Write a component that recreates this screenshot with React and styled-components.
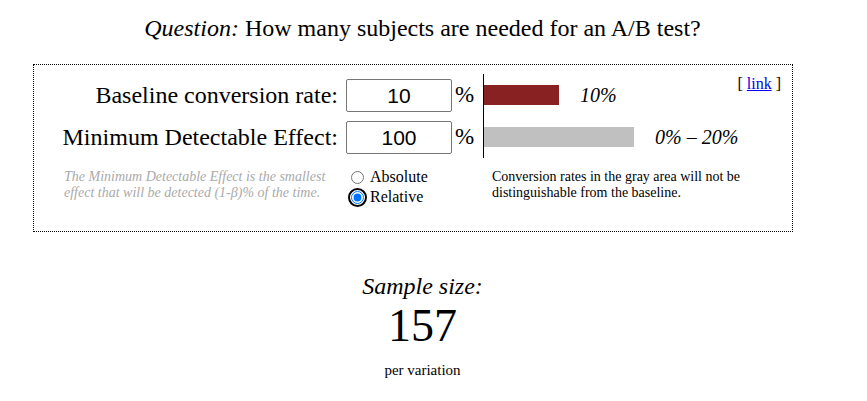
import React from 'react'
import styled, { createGlobalStyle } from 'styled-components'

const GlobalStyle = createGlobalStyle`
body {
    margin: 0;
    background: #fff;
    font-family: "Liberation Serif", "Times New Roman", serif;
    color: #000;
}
`

const Page = styled.div`
width: 845px;
`
const Title = styled.h1`
margin: 0;
padding-top: 14px;
text-align: center;
font-weight: normal;
font-size: 24px;
line-height: 28px;
`
const Em = styled.em``

const Box = styled.div`
position: relative;
box-sizing: border-box;
margin: 22px 0 0 33px;
width: 760px;
height: 168px;
border: 1px dotted #000;
padding-top: 9px;
`
const Grid = styled.div`
display: grid;
grid-template-columns: 312px 106px 31px 1fr;
grid-auto-rows: 42px;
`
const Label = styled.div`
text-align: right;
padding-right: 8px;
font-size: 24px;
line-height: 42px;
white-space: nowrap;
`
const InputCell = styled.div`
padding-top: 5px;
`
const NumberInput = styled.input`
box-sizing: border-box;
width: 106px;
height: 33px;
border: 1px solid #767676;
border-radius: 2px;
font-family: "Liberation Sans", Arial, sans-serif;
font-size: 21px;
text-align: center;
padding: 0;
`
const Percent = styled.div`
padding-left: 3px;
font-size: 23px;
line-height: 42px;
`
const BarCell = styled.div`
border-left: 1px solid #000;
display: flex;
align-items: center;
`
const Bar = styled.div`
height: 20px;
background: ${({ $color }) => $color};
`
const BarValue = styled.span`
margin-left: 21px;
font-style: italic;
font-size: 20px;
`
const LinkWrap = styled.div`
position: absolute;
top: 10px;
right: 11px;
font-size: 16px;
`
const Link = styled.a`
color: #0000ee;
`
const Lower = styled.div`
display: grid;
grid-template-columns: 312px 137px 1fr;
padding-top: 9px;
`
const Help = styled.div`
padding-left: 30px;
padding-right: 8px;
padding-top: 2px;
font-style: italic;
font-size: 14px;
line-height: 16px;
color: #aaa;
`
const Radios = styled.div`
display: flex;
flex-direction: column;
font-size: 16px;
`
const RadioRow = styled.label`
display: flex;
align-items: center;
height: 20px;
`
const Ring = styled.span`
display: inline-flex;
box-sizing: border-box;
width: 19px;
height: 19px;
margin: 0 3px 0 2px;
align-items: center;
justify-content: center;
border-radius: 50%;
border: 2px solid ${({ $on }) => ($on ? '#000' : 'transparent')};
`
const Radio = styled.input`
margin: 0;
width: 13px;
height: 13px;
accent-color: #0075ff;
outline: none;
`
const Note = styled.div`
padding-left: 9px;
padding-right: 30px;
padding-top: 2px;
font-size: 14px;
line-height: 16px;
`
const Result = styled.div`
margin-top: 40px;
text-align: center;
`
const ResultLabel = styled.div`
font-style: italic;
font-size: 24px;
line-height: 28px;
`
const ResultNumber = styled.div`
font-size: 46px;
line-height: 52px;
`
const ResultUnit = styled.div`
margin-top: 10px;
font-size: 15px;
`

const App = () => {
    const baseline = 10
    const scale = 7.5
    return (
        <Page>
            <GlobalStyle />
            <Title><Em>Question:</Em> How many subjects are needed for an A/B test?</Title>
            <Box>
                <LinkWrap>[ <Link href="#">link</Link> ]</LinkWrap>
                <Grid>
                    <Label>Baseline conversion rate:</Label>
                    <InputCell><NumberInput defaultValue="10" /></InputCell>
                    <Percent>%</Percent>
                    <BarCell>
                        <Bar $color="#882222" style={{ width: baseline * scale }} />
                        <BarValue>10%</BarValue>
                    </BarCell>
                    <Label>Minimum Detectable Effect:</Label>
                    <InputCell><NumberInput defaultValue="100" /></InputCell>
                    <Percent>%</Percent>
                    <BarCell>
                        <Bar $color="#c0c0c0" style={{ width: 20 * scale }} />
                        <BarValue>0% – 20%</BarValue>
                    </BarCell>
                </Grid>
                <Lower>
                    <Help>The Minimum Detectable Effect is the smallest effect that will be detected (1-β)% of the time.</Help>
                    <Radios>
                        <RadioRow><Ring><Radio type="radio" name="mde" /></Ring>Absolute</RadioRow>
                        <RadioRow><Ring $on><Radio type="radio" name="mde" defaultChecked /></Ring>Relative</RadioRow>
                    </Radios>
                    <Note>Conversion rates in the gray area will not be distinguishable from the baseline.</Note>
                </Lower>
            </Box>
            <Result>
                <ResultLabel>Sample size:</ResultLabel>
                <ResultNumber>157</ResultNumber>
                <ResultUnit>per variation</ResultUnit>
            </Result>
        </Page>
    )
}

export default App
